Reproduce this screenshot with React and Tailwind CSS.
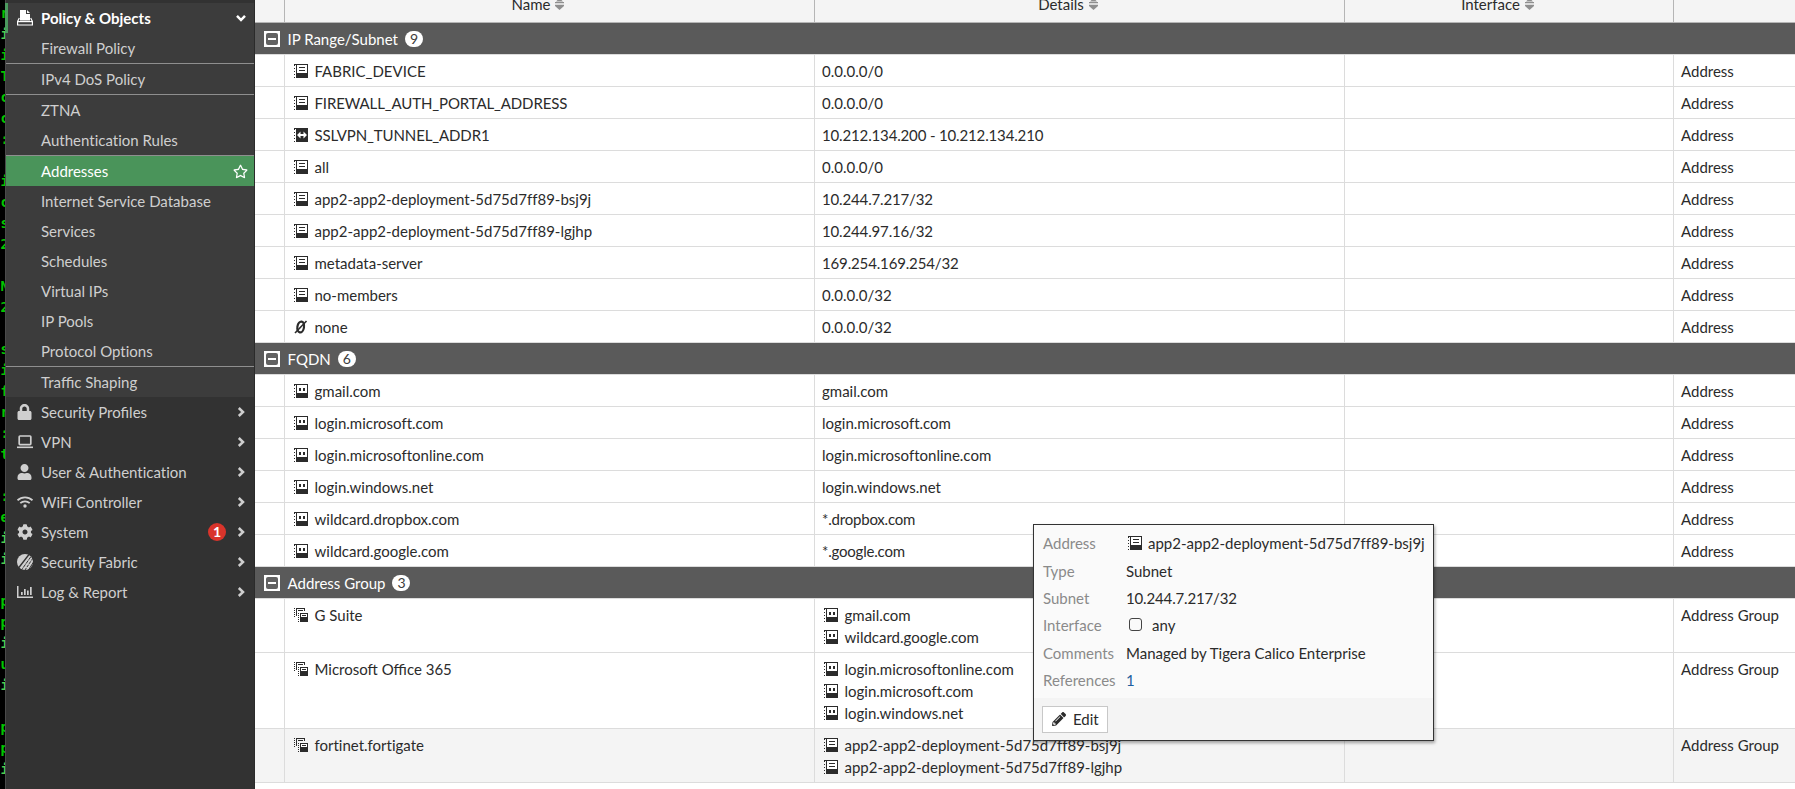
import { FaLock, FaUser, FaCog, FaPencilAlt, FaRegStar } from 'react-icons/fa';

const terminalLines = [
  ' r', 'ni', ' i', ' T', ' c', ' c', ' :', '', ' i', ' c', ' s', ' 2', '', ' N', ' 2', '', ' s', ' i', ' f',
  ' r', ' :', ' t', '', ' :', ' e', 'ni', 'ni', '', ' p', ' p', 'ni', ' u', 'ni', '', ' p', ' p', 'ni', '',
];

const policyItems = [
  { label: 'Firewall Policy' },
  { label: 'IPv4 DoS Policy', divider: true },
  { label: 'ZTNA', divider: true },
  { label: 'Authentication Rules' },
  { label: 'Addresses', divider: true, active: true },
  { label: 'Internet Service Database' },
  { label: 'Services' },
  { label: 'Schedules' },
  { label: 'Virtual IPs' },
  { label: 'IP Pools' },
  { label: 'Protocol Options' },
  { label: 'Traffic Shaping', divider: true },
];

const menuItems = [
  { label: 'Security Profiles', icon: <FaLock className="w-[15px] h-4" /> },
  { label: 'VPN', icon: <LaptopIcon /> },
  { label: 'User & Authentication', icon: <FaUser className="w-[15px] h-4" /> },
  { label: 'WiFi Controller', icon: <WifiIcon /> },
  { label: 'System', icon: <FaCog className="w-4 h-4" />, alerts: 1 },
  { label: 'Security Fabric', icon: <FabricIcon /> },
  { label: 'Log & Report', icon: <ChartIcon /> },
];

const subnets = [
  { icon: 'subnet', name: 'FABRIC_DEVICE', details: '0.0.0.0/0' },
  { icon: 'subnet', name: 'FIREWALL_AUTH_PORTAL_ADDRESS', details: '0.0.0.0/0', tight: true },
  { icon: 'range', name: 'SSLVPN_TUNNEL_ADDR1', details: '10.212.134.200 - 10.212.134.210', tight: true },
  { icon: 'subnet', name: 'all', details: '0.0.0.0/0' },
  { icon: 'subnet', name: 'app2-app2-deployment-5d75d7ff89-bsj9j', details: '10.244.7.217/32' },
  { icon: 'subnet', name: 'app2-app2-deployment-5d75d7ff89-lgjhp', details: '10.244.97.16/32' },
  { icon: 'subnet', name: 'metadata-server', details: '169.254.169.254/32' },
  { icon: 'subnet', name: 'no-members', details: '0.0.0.0/32' },
  { icon: 'none', name: 'none', details: '0.0.0.0/32' },
];

const fqdns = [
  { icon: 'fqdn', name: 'gmail.com', details: 'gmail.com' },
  { icon: 'fqdn', name: 'login.microsoft.com', details: 'login.microsoft.com' },
  { icon: 'fqdn', name: 'login.microsoftonline.com', details: 'login.microsoftonline.com' },
  { icon: 'fqdn', name: 'login.windows.net', details: 'login.windows.net' },
  { icon: 'fqdn', name: 'wildcard.dropbox.com', details: '*.dropbox.com' },
  { icon: 'fqdn', name: 'wildcard.google.com', details: '*.google.com' },
];

const groups = [
  { name: 'G Suite', icon: 'fqdn', members: ['gmail.com', 'wildcard.google.com'] },
  {
    name: 'Microsoft Office 365',
    icon: 'fqdn',
    members: ['login.microsoftonline.com', 'login.microsoft.com', 'login.windows.net'],
  },
  {
    name: 'fortinet.fortigate',
    icon: 'subnet',
    members: ['app2-app2-deployment-5d75d7ff89-bsj9j', 'app2-app2-deployment-5d75d7ff89-lgjhp'],
    hovered: true,
  },
];

function PolicyIcon() {
  return (
    <svg className="w-4 h-4" viewBox="0 0 16 16" fill="currentColor">
      <path d="M3 0h6v4h4v6.500H3z" />
      <path d="M10 0l3 3h-3z" />
      <path d="M2.300 8L.6 11.500V15h14.800v-3.500L13.700 8" fill="none" stroke="currentColor" strokeWidth="1.200" />
      <path d="M.6 11h14.800v1.200H.6z" />
    </svg>
  );
}

function LaptopIcon() {
  return (
    <svg className="w-4 h-4" viewBox="0 0 16 16" fill="none" stroke="currentColor">
      <rect x="2.200" y="2" width="11.600" height="8.600" rx="0.800" strokeWidth="1.700" />
      <path d="M0 13.300h16" strokeWidth="1.600" />
    </svg>
  );
}

function WifiIcon() {
  return (
    <svg className="w-4 h-4" viewBox="0 0 16 16" fill="none" stroke="currentColor" strokeWidth="1.800">
      <path d="M.5 6.300c4.200-4 10.800-4 15 0" />
      <path d="M3.300 9.200c2.700-2.500 6.700-2.500 9.400 0" />
      <circle cx="8" cy="12" r="1.700" fill="currentColor" stroke="none" />
    </svg>
  );
}

function FabricIcon() {
  return (
    <svg className="w-4 h-4" viewBox="0 0 16 16">
      <circle cx="8" cy="8" r="8" fill="currentColor" />
      <g stroke="#323232" strokeWidth="1" fill="none">
        <path d="M12 .5L1.500 14" strokeWidth="1.300" />
        <path d="M14 2.500L4.500 16" strokeDasharray="4 .8" />
        <path d="M16 4L8 16" strokeDasharray="3 1" />
        <path d="M16.500 8L11.500 16" />
      </g>
    </svg>
  );
}

function ChartIcon() {
  return (
    <svg className="w-4 h-4" viewBox="0 0 16 16" fill="currentColor">
      <path d="M0 2h1.500v10.500H16V14H0z" />
      <path d="M4 8h1.700v3H4zM7 5h1.700v6H7zM10 6.500h1.700v4.500H10zM13 3h1.700v8H13z" />
    </svg>
  );
}

function Chevron({ down }) {
  return (
    <svg className={down ? 'w-[10px] h-[10px] rotate-90' : 'w-[10px] h-[10px]'} viewBox="0 0 10 10">
      <path d="M2.800 1L7 5L2.800 9" fill="none" stroke="currentColor" strokeWidth="2.500" />
    </svg>
  );
}

function AddressIcon({ type }) {
  if (type === 'none') {
    return (
      <svg className="w-[14px] h-[14px] shrink-0" viewBox="0 0 14 14" fill="none" stroke="#2b2b2b">
        <ellipse cx="6.700" cy="7" rx="3.300" ry="5.500" strokeWidth="2.200" transform="rotate(10 6.700 7)" />
        <path d="M12.500 1L1 13" strokeWidth="1.600" />
      </svg>
    );
  }

  if (type === 'group') {
    return (
      <svg className="w-[14px] h-[14px] shrink-0" viewBox="0 0 14 14" fill="#2b2b2b" shapeRendering="crispEdges">
        <path d="M0 0h1v1H0zM0 2h1v1H0zM0 4h1v1H0zM0 6h1v1H0zM0 8h1v1H0z" />
        <path d="M2 0h9v1H2zM2 1h1v7H2zM10 1h1v2h-1zM4 2h5v1H4z" />
        <path d="M4 5h1v1H4zM4 7h1v1H4zM4 9h1v1H4zM4 11h1v1H4zM4 13h1v1H4z" />
        <path d="M6 5h8v9H6z" />
        <path d="M7 6h6v3H7z" fill="#fff" />
        <path d="M8 7h4v1H8z" />
      </svg>
    );
  }

  return (
    <svg className="w-[14px] h-[14px] shrink-0" viewBox="0 0 14 14" fill="#2b2b2b" shapeRendering="crispEdges">
      <path d="M0 1h1v1H0zM0 4h1v1H0zM0 7h1v1H0zM0 10h1v1H0zM0 13h1v1H0zM0 0h3v1H0z" />
      <path d="M2 0h12v14H2z" />
      {type === 'subnet' && (
        <>
          <path d="M3 1h10v8H3z" fill="#fff" />
          <path d="M5 3h6v1H5zM5 6h6v1H5z" />
        </>
      )}
      {type === 'fqdn' && (
        <>
          <path d="M3 1h10v8H3z" fill="#fff" />
          <path d="M5 4h2v3H5zM9 4h2v3H9z" />
        </>
      )}
      {type === 'range' && (
        <path
          d="M3 7l3.500-3.500v2.500h3v-2.500L13 7l-3.500 3.500v-2.500h-3v2.500z"
          fill="#fff"
          shapeRendering="auto"
        />
      )}
    </svg>
  );
}

// "fi" and "ffi" are joined, every other pair stays separate
function Label({ children }) {
  return (
    <span className={children.includes('fi') ? '[font-variant-ligatures:normal]' : ''}>{children}</span>
  );
}

function Sidebar() {
  return (
    <nav className="w-[250px] shrink-0 bg-[#323232] border-l border-l-[#4a4a4a] border-r border-r-[#2b2b2b] pt-[3px] text-[#cfcfcf]">
      <div className="bg-[#3c3c3c]">
        <div className="flex items-center h-[30px] -ml-px border-l-[3px] border-[#4c9a5f] pl-[9px] pr-2 text-white font-bold">
          <PolicyIcon />
          <span className="flex-1 ml-2">Policy &amp; Objects</span>
          <Chevron down />
        </div>
        {policyItems.map((item) => (
          <div key={item.label} className={item.divider ? 'border-t border-[#8f8f8f]' : ''}>
            <div
              className={
                item.active
                  ? 'flex items-center justify-between h-[30px] pl-[35px] pr-[6px] bg-[#4a945a] text-white'
                  : 'flex items-center h-[30px] pl-[35px]'
              }
            >
              <Label>{item.label}</Label>
              {item.active && <FaRegStar className="w-[15px] h-[15px]" />}
            </div>
          </div>
        ))}
      </div>
      {menuItems.map((item) => (
        <div key={item.label} className="flex items-center h-[30px] pl-[11px] pr-2">
          <span className="flex items-center w-6">{item.icon}</span>
          <span className="flex-1">
            <Label>{item.label}</Label>
          </span>
          {item.alerts && (
            <span className="flex items-center justify-center w-[18px] h-[18px] mr-[10px] rounded-full bg-[#d9342b] text-white text-sm font-bold">
              {item.alerts}
            </span>
          )}
          <Chevron />
        </div>
      ))}
    </nav>
  );
}

function HeaderCell({ children, className }) {
  return (
    <div className={`flex items-center justify-center gap-[5px] pr-[23px] pb-[2px] border-r border-[#b5b5b5] ${className}`}>
      <span>{children}</span>
      <svg className="w-[9px] h-[12px]" viewBox="0 0 9 12" fill="#8f8f8f">
        <path d="M4.500 0L8 3.500H1zM0 4h9v1.300H0zM0 6.700h9V8L4.500 12L0 8z" />
      </svg>
    </div>
  );
}

function GroupHeader({ title, count }) {
  return (
    <div className="flex items-center h-8 pl-[9px] bg-[#5a5a5a] border-b border-[#dcdcdc] text-white">
      <svg className="w-4 h-4" viewBox="0 0 16 16">
        <rect width="16" height="16" fill="#fff" />
        <rect x="2" y="2" width="12" height="12" rx="2" fill="#626262" />
        <rect x="4" y="7" width="8" height="2" fill="#fff" />
      </svg>
      <span className="ml-[7.500px]">{title}</span>
      <span className="flex items-center justify-center w-[18px] h-4 ml-[7px] rounded-full bg-white text-[#3c3c3c] text-sm">
        {count}
      </span>
    </div>
  );
}

function Row({ icon, name, type, tight, hovered, children }) {
  return (
    <div className={hovered ? 'flex border-b border-[#dcdcdc] bg-[#f4f4f4]' : 'flex border-b border-[#dcdcdc] bg-white'}>
      <div className="w-[30px] border-r border-[#dcdcdc]"></div>
      <div className="flex gap-[6.500px] w-[530px] pl-[9px] pt-[5px] border-r border-[#dcdcdc]">
        <span className="flex items-center h-[22px]">
          <AddressIcon type={icon} />
        </span>
        <span className={tight ? 'tracking-[-0.12px]' : ''}>
          <Label>{name}</Label>
        </span>
      </div>
      <div className="w-[530px] pl-[7px] pt-[5px] pb-1 border-r border-[#dcdcdc]">{children}</div>
      <div className="w-[329px] border-r border-[#dcdcdc]"></div>
      <div className="flex-1 pl-[7px] pt-[5px]">{type}</div>
    </div>
  );
}

function AddressTable() {
  return (
    <main className="flex-1 min-w-0 bg-white">
      <div className="flex h-[35px] -mt-3 bg-[#f4f4f4] border-b border-[#b5b5b5]">
        <div className="w-[30px] border-r border-[#b5b5b5]"></div>
        <HeaderCell className="w-[530px]">Name</HeaderCell>
        <HeaderCell className="w-[530px]">Details</HeaderCell>
        <HeaderCell className="w-[329px]">Interface</HeaderCell>
      </div>

      <GroupHeader title="IP Range/Subnet" count={9} />
      {subnets.map((row) => (
        <Row key={row.name} icon={row.icon} name={row.name} type="Address" tight={row.tight}>
          <span className={row.details.startsWith('1') ? 'tracking-[-0.15px]' : ''}>{row.details}</span>
        </Row>
      ))}

      <GroupHeader title="FQDN" count={6} />
      {fqdns.map((row) => (
        <Row key={row.name} icon={row.icon} name={row.name} type="Address">
          <span className={row.details.startsWith('*') ? 'tracking-[-0.2px]' : ''}>{row.details}</span>
        </Row>
      ))}

      <GroupHeader title="Address Group" count={3} />
      {groups.map((group) => (
        <Row key={group.name} icon="group" name={group.name} type="Address Group" hovered={group.hovered}>
          {group.members.map((member) => (
            <div key={member} className="flex gap-[6.500px] pl-[2px]">
              <span className="flex items-center h-[22px]">
                <AddressIcon type={group.icon} />
              </span>
              <span>{member}</span>
            </div>
          ))}
        </Row>
      ))}
    </main>
  );
}

function TooltipRow({ label, children }) {
  return (
    <div className="flex items-center h-[27.400px]">
      <span className="w-[83px] text-[#8a8a8a]">{label}</span>
      {children}
    </div>
  );
}

function AddressTooltip() {
  return (
    <div className="absolute left-[1033px] top-[524px] w-[401px] h-[217px] flex flex-col bg-[#fafafa] border border-[#333] shadow-[1px_2px_3px_rgba(0,0,0,0.35)]">
      <div className="flex-1 pl-[9px] pt-[4.500px]">
        <TooltipRow label="Address">
          <span className="flex items-center gap-[6px] pl-[2px]">
            <AddressIcon type="subnet" />
            app2-app2-deployment-5d75d7ff89-bsj9j
          </span>
        </TooltipRow>
        <TooltipRow label="Type">Subnet</TooltipRow>
        <TooltipRow label="Subnet">
          <span className="tracking-[-0.15px]">10.244.7.217/32</span>
        </TooltipRow>
        <TooltipRow label="Interface">
          <span className="w-[13px] h-[13px] ml-[3px] mr-[10px] -mt-[2px] border-[1.500px] border-[#444] rounded-[3px]"></span>
          any
        </TooltipRow>
        <TooltipRow label="Comments">Managed by Tigera Calico Enterprise</TooltipRow>
        <TooltipRow label="References">
          <span className="text-[#1d5fa0]">1</span>
        </TooltipRow>
      </div>
      <div className="flex items-center h-[42px] pl-2 bg-[#f4f4f4]">
        <button className="flex items-center gap-[7px] w-[66px] h-[27px] pl-[9px] bg-white border border-[#c8c8c8]">
          <FaPencilAlt className="w-[14px] h-[14px]" />
          Edit
        </button>
      </div>
    </div>
  );
}

export default function App() {
  return (
    <div className="relative flex w-[1795px] h-[789px] overflow-hidden bg-white font-['Lato',sans-serif] text-[15px] leading-[22px] text-[#2b2b2b] [font-variant-ligatures:none]">
      <div className="w-[5px] shrink-0 overflow-hidden bg-black pt-[3px] font-['DejaVu_Sans_Mono',monospace] text-sm leading-[21px] font-bold text-[#00c800] whitespace-pre">
        {terminalLines.map((line, i) => (
          <div key={i} className={line === 'ni' ? 'h-[21px] -ml-2 text-[#4fd04f]' : 'h-[21px] -ml-2'}>
            {line}
          </div>
        ))}
      </div>
      <Sidebar />
      <AddressTable />
      <AddressTooltip />
    </div>
  );
}
